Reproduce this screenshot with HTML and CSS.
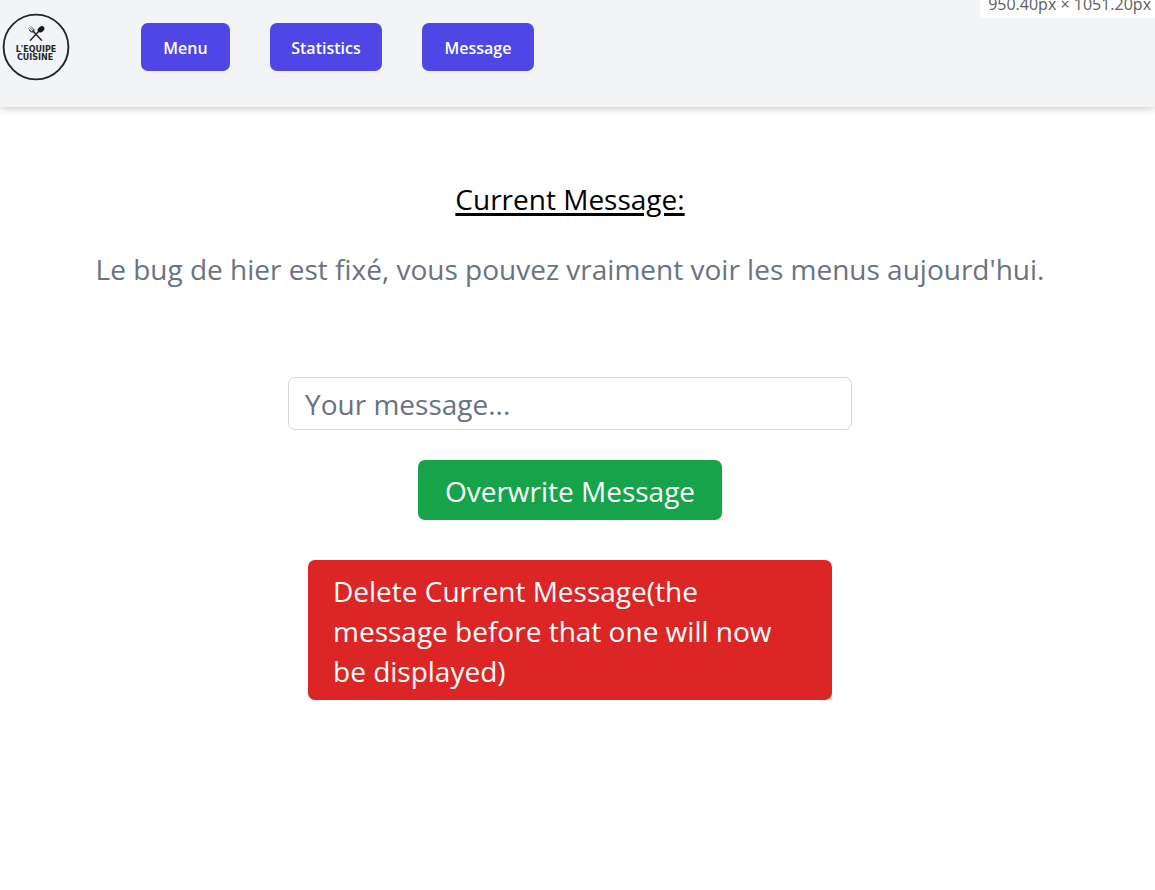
FILE: index.html
```html
<!DOCTYPE html>
<html lang="en">
<head>
<meta charset="utf-8">
<meta name="viewport" content="width=device-width, initial-scale=1">
<title>L'Equipe Cuisine</title>
<link rel="stylesheet" href="styles.css">
</head>
<body>
<header class="topbar">
  <a class="logo" href="#" aria-label="L'Equipe Cuisine">
    <svg viewBox="0 0 72 72" width="72" height="72">
      <circle cx="36" cy="36" r="32.4" fill="none" stroke="#25262a" stroke-width="1.9"/>
      <g stroke="#25262a" fill="none" stroke-linecap="round">
        <path d="M30.400 29.200 L39 20" stroke-width="1.500"/>
        <path d="M41.600 29.200 L32.800 20" stroke-width="1.500"/>
        <path d="M28.600 17.800 L31.800 21 M30 16.700 L33.200 20 M31.400 15.800 L34 18.800" stroke-width="1" stroke="#66676b"/>
        <path d="M29.400 19.400 Q31 21.800 33.800 20.800 L34 18.800" stroke-width="1"/>
      </g>
      <ellipse cx="41" cy="18.300" rx="3.700" ry="2.700" transform="rotate(-38 41 18.300)" fill="#17181b"/>
      <text class="logo-text" x="36" y="41" text-anchor="middle">L'EQUIPE</text>
      <text class="logo-text" x="35" y="49" text-anchor="middle">CUISINE</text>
    </svg>
  </a>
  <nav class="nav">
    <button class="nav-button" type="button">Menu</button>
    <button class="nav-button" type="button">Statistics</button>
    <button class="nav-button" type="button">Message</button>
  </nav>
  <div class="size-badge">950.40px × 1051.20px</div>
</header>
<main class="content">
  <h1 class="heading">Current Message:</h1>
  <p class="message">Le bug de hier est fixé, vous pouvez vraiment voir les menus aujourd'hui.</p>
  <form class="form">
    <input class="field" type="text" aria-label="Your message" placeholder="Your message...">
    <button class="action overwrite" type="button">Overwrite Message</button>
    <button class="action delete" type="button">Delete Current Message(the message before that one will now be displayed)</button>
  </form>
</main>
</body>
</html>
```
FILE: styles.css
```css
* {
  box-sizing: border-box;
}

body {
  margin: 0;
  background: #fff;
  color: #000;
  font-family: "Segoe UI", "Open Sans", "Noto Sans", sans-serif;
}

button,
input {
  font: inherit;
}

.topbar {
  position: relative;
  display: flex;
  align-items: flex-start;
  gap: 69px;
  padding: 11px 0 24px;
  background: #f3f4f6;
  box-shadow: 0 1px 8px rgba(0, 0, 0, 0.24);
}

.logo svg {
  display: block;
}

.logo-text {
  fill: #25262a;
  font-family: "DejaVu Sans", sans-serif;
  font-size: 8px;
  font-weight: 700;
}

.nav {
  display: grid;
  grid-template-columns: 89px 112px 112px;
  gap: 40px;
  padding-top: 12px;
}

.nav-button {
  padding: 13px 0 11px;
  border: 0;
  border-radius: 7px;
  background: #4f46e5;
  color: #fff;
  font-size: 16px;
  font-weight: 600;
  line-height: 24px;
  text-align: center;
}

.size-badge {
  position: absolute;
  top: -9px;
  right: 0;
  padding: 0 4px 0 8px;
  background: #fff;
  color: #5c5c5c;
  font-size: 16px;
  line-height: 27px;
  white-space: nowrap;
}

.content {
  display: flex;
  flex-direction: column;
  align-items: center;
  padding: 72px 15px 40px 0;
  font-size: 28px;
  line-height: 40px;
}

.heading {
  margin: 0;
  font-size: inherit;
  font-weight: 400;
  text-decoration: underline;
  text-decoration-thickness: 3px;
  text-underline-offset: 3px;
}

.message {
  margin: 30px 0 0;
  color: #6b7280;
}

.form {
  display: flex;
  flex-direction: column;
  align-items: center;
  width: 100%;
  max-width: 564px;
  margin-top: 88px;
}

.field {
  width: 100%;
  height: 53px;
  padding: 5px 16px 4px;
  border: 1px solid #d1d5db;
  border-radius: 7px;
  background: #fff;
}

.field::placeholder {
  color: #6b7280;
  opacity: 1;
}

.action {
  padding: 11px 25px 9px;
  border: 0;
  border-radius: 7px;
  color: #fff;
}

.overwrite {
  margin-top: 30px;
  padding-inline: 27px;
  background: #16a34a;
}

.delete {
  max-width: 524px;
  margin-top: 40px;
  background: #dc2626;
  text-align: left;
}
```
